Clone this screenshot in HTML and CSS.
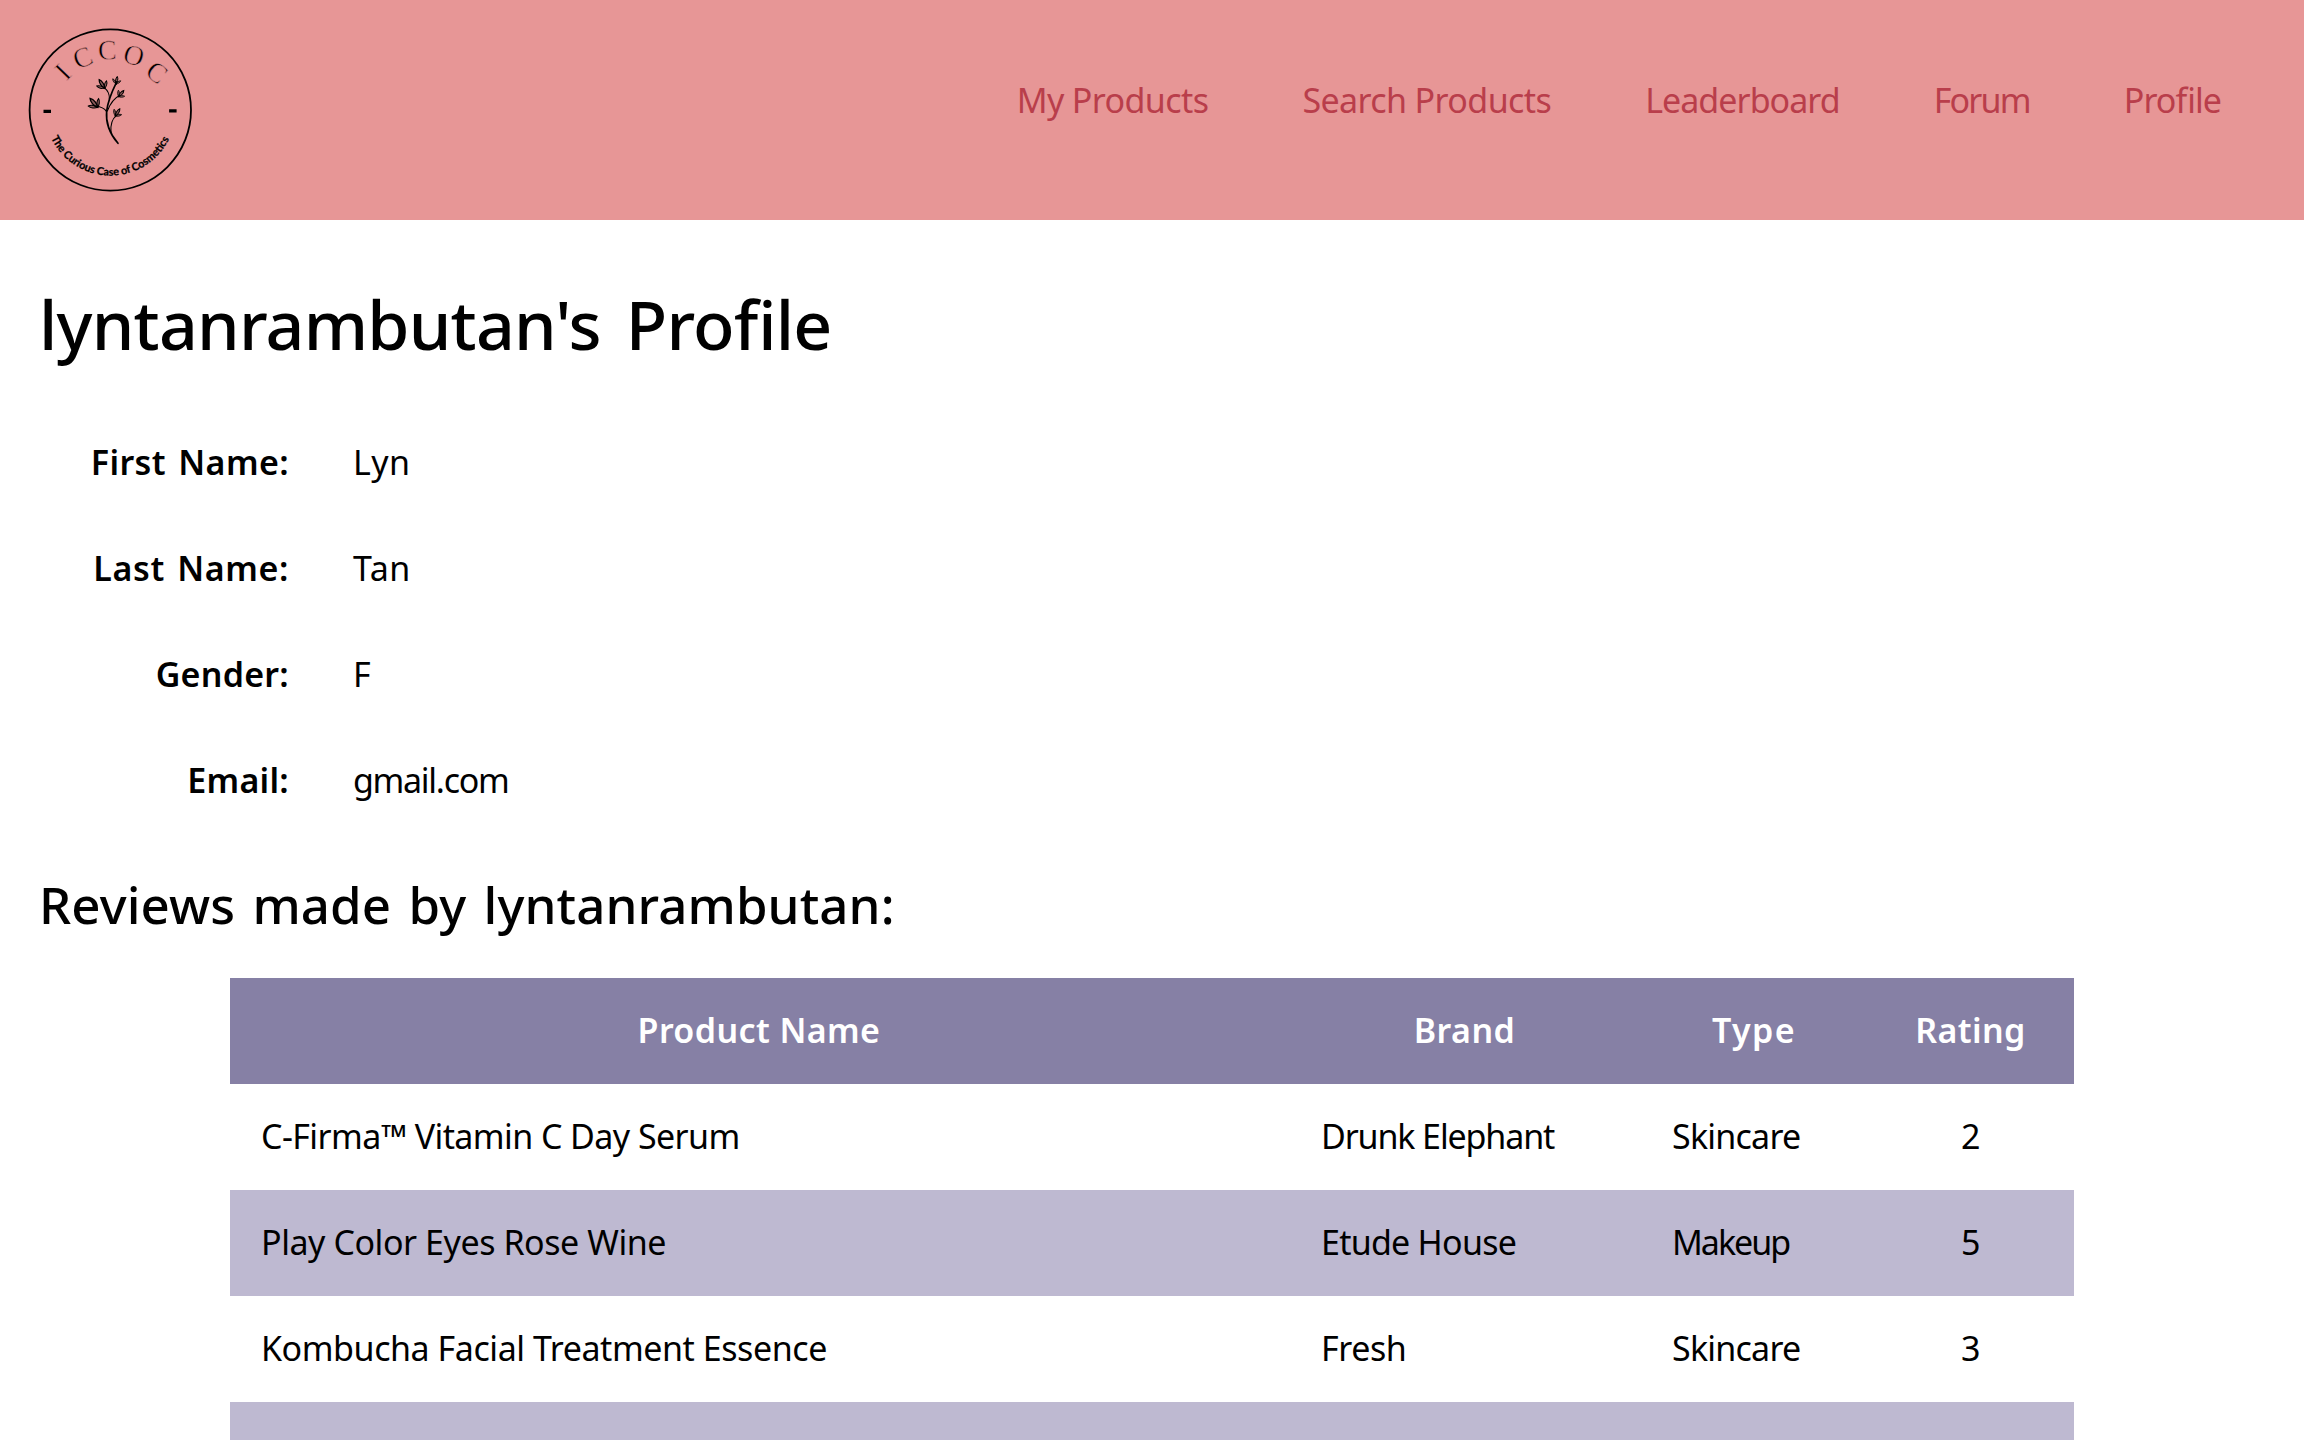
FILE: index.html
```
<!DOCTYPE html>
<html lang="en">
<head>
<meta charset="utf-8">
<title>lyntanrambutan's Profile</title>
<link rel="stylesheet" href="styles.css">
</head>
<body>
<header class="site-header">
  <svg class="logo" viewBox="0 0 220 220" role="img" aria-label="ICCOC">
    <defs>
      <path id="motto-arc" d="M51.1 137.9A65.3 65.3 0 0 0 169.5 137.9"/>
      <path id="leaf" d="M0 0C-5 -7 -6 -20 -1 -27C5 -20 4 -7 0 0Z"/>
      <g id="sprig">
        <use href="#leaf"/>
        <use href="#leaf" transform="rotate(-42) scale(.8)"/>
        <use href="#leaf" transform="rotate(46) scale(.75)"/>
      </g>
    </defs>
    <circle class="logo-ring" cx="110.3" cy="110" r="80.7"/>
    <path d="M43.5 109.8h7.5v3.2h-7.5zM169.1 109.2h7.5v3.2h-7.5z"/>
    <g class="logo-initials">
      <text transform="translate(63.3 72.5) rotate(-46)" y="8.5">I</text>
      <text transform="translate(83 58.3) rotate(-22)" y="8.5">C</text>
      <text transform="translate(107.3 51) rotate(-2)" y="8.5">C</text>
      <text transform="translate(133.7 56) rotate(17)" y="8.5">O</text>
      <text transform="translate(156.3 73) rotate(38)" y="8.5">C</text>
    </g>
    <g class="logo-plant" transform="scale(.3333)">
      <path class="stem" d="M354 430C328 400 317 365 320 333C325 295 338 270 350 246"/>
      <path d="M320 335C313 325 302 320 288 319M328 296C329 280 322 270 312 262M322 333C332 308 343 294 360 286M333 397C331 373 338 355 350 346"/>
      <use href="#sprig" transform="translate(293 322) rotate(-38) scale(1.3)"/>
      <use href="#sprig" transform="translate(314 265) rotate(-30) scale(1.15)"/>
      <use href="#sprig" transform="translate(348 252) rotate(12) scale(.85)"/>
      <use href="#sprig" transform="translate(356 290) rotate(42) scale(.9)"/>
      <use href="#sprig" transform="translate(346 348) rotate(34) scale(.95)"/>
    </g>
    <text class="logo-motto"><textPath href="#motto-arc" textLength="147">The Curious Case of Cosmetics</textPath></text>
  </svg>
  <nav class="nav">
    <a class="nav-wide" href="#">My Products</a>
    <a class="nav-wide" href="#">Search Products</a>
    <a class="nav-mid" href="#">Leaderboard</a>
    <a class="nav-tight" href="#">Forum</a>
    <a class="nav-mid" href="#">Profile</a>
  </nav>
</header>
<main>
  <h1>lyntanrambutan's Profile</h1>
  <dl class="details">
    <dt>First Name:</dt><dd>Lyn</dd>
    <dt class="last-name">Last Name:</dt><dd>Tan</dd>
    <dt class="snug">Gender:</dt><dd>F</dd>
    <dt class="snug">Email:</dt><dd class="email">gmail.com</dd>
  </dl>
  <h2>Reviews made by lyntanrambutan:</h2>
  <table class="reviews">
    <colgroup><col class="col-product"><col class="col-brand"><col class="col-type"><col class="col-rating"></colgroup>
    <thead>
      <tr><th>Product Name</th><th>Brand</th><th class="th-type">Type</th><th>Rating</th></tr>
    </thead>
    <tbody>
      <tr><td class="serum">C-Firma™ Vitamin C Day Serum</td><td class="tight">Drunk Elephant</td><td class="type">Skincare</td><td class="rating">2</td></tr>
      <tr><td>Play Color Eyes Rose Wine</td><td class="brand">Etude House</td><td class="makeup">Makeup</td><td class="rating">5</td></tr>
      <tr><td>Kombucha Facial Treatment Essence</td><td class="fresh">Fresh</td><td class="type">Skincare</td><td class="rating">3</td></tr>
      <tr><td></td><td></td><td></td><td></td></tr>
    </tbody>
  </table>
</main>
</body>
</html>
```
FILE: styles.css
```
* { box-sizing: border-box; }

body {
  margin: 0;
  height: 100vh;
  overflow: hidden;
  background: #fff;
  color: #000;
  font: 400 34px/42px "Noto Sans", sans-serif;
  font-feature-settings: "liga" 1;
}

.site-header {
  display: flex;
  justify-content: space-between;
  align-items: flex-start;
  height: 220px;
  background: #e79696;
}

.logo { width: 220px; height: 220px; }
.logo-ring { fill: none; stroke: #000; stroke-width: 1.8; }
.logo-initials {
  font: 400 28px "Liberation Serif", serif;
  text-anchor: middle;
  stroke: #e79696;
  stroke-width: .6;
}
.logo-motto { font: 700 10.8px Lato, sans-serif; stroke: #000; stroke-width: .25; }
.logo-plant { fill: rgba(0, 0, 0, .4); stroke: #000; stroke-width: 3.2; stroke-linecap: round; }
.logo-plant > path { fill: none; }
.logo-plant > .stem { stroke-width: 5; }

.nav { display: flex; gap: 94px; padding: 79px 83px 0 0; }
.nav a { color: #b93e4b; text-decoration: none; white-space: nowrap; }
.nav-wide { letter-spacing: -.6px; }
.nav-mid { letter-spacing: -.95px; }
.nav-tight { letter-spacing: -1.8px; }

h1, h2 { margin: 0 39px; font-weight: 500; }
h1 { margin-top: 62px; font-size: 68px; line-height: 84px; letter-spacing: -.76px; word-spacing: 8px; }
h2 { margin-top: 39px; font-size: 51px; line-height: 62px; letter-spacing: .1px; word-spacing: 4px; }

.details {
  display: grid;
  grid-template-columns: 282px auto;
  margin: 44px 39px 0;
}
.details dt, .details dd { margin: 0; padding: 31px 32px 33px; }
.details dt {
  padding-right: 32px;
  text-align: right;
  font-weight: 600;
  letter-spacing: .4px;
  word-spacing: 3px;
}
.details .last-name { letter-spacing: .6px; }
.details .snug { letter-spacing: .25px; }
.details dd { letter-spacing: .45px; }
.details .email { letter-spacing: -1.3px; }

.reviews {
  width: 1844px;
  margin: 43px auto 0;
  border-collapse: collapse;
  table-layout: fixed;
}
.col-product { width: 1060px; }
.col-brand { width: 351px; }
.col-type { width: 228px; }
.col-rating { width: 205px; }
.reviews tr { height: 106px; }
.reviews th, .reviews td { padding: 31px 33px 33px 31px; vertical-align: top; }
.reviews th {
  background: #8680a5;
  color: #fff;
  font-weight: 600;
  letter-spacing: .4px;
}
.reviews .th-type { letter-spacing: 1.4px; }
.reviews td { text-align: left; letter-spacing: -.44px; white-space: nowrap; }
.reviews tbody tr:nth-child(even) { background: #beb9d1; }
.reviews .serum { letter-spacing: -.58px; }
.reviews .tight { letter-spacing: -1.13px; }
.reviews .brand { letter-spacing: -.75px; }
.reviews .fresh { letter-spacing: -.4px; }
.reviews .type { letter-spacing: -.77px; }
.reviews .makeup { letter-spacing: -2px; }
.reviews .rating { text-align: center; }
```
